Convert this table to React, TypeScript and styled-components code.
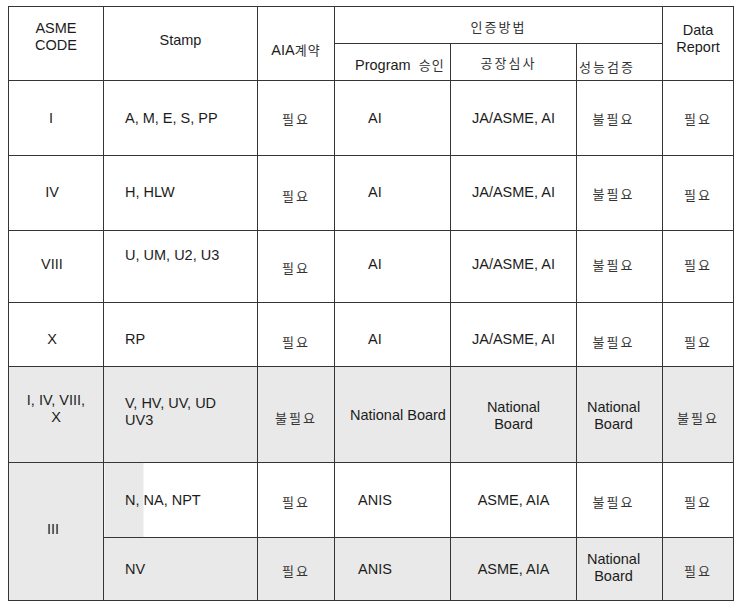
import React from 'react';
import styled, {createGlobalStyle} from 'styled-components';

const GlobalStyle = createGlobalStyle`
  body {
    margin: 0;
    background: #ffffff;
  }
`;

const GREY = '#e9e9e9';

const Page = styled.div`
  padding: 6px 0 0 8px;
`;

const Table = styled.table`
  border-collapse: collapse;
  table-layout: fixed;
  width: 725px;
  font-family: 'Liberation Sans', Arial, sans-serif;
  font-size: 14.5px;
  line-height: 17px;
  color: #1c1c1c;
`;

const Row = styled.tr<{$h: number}>`
  height: ${(p) => p.$h}px;
`;

type CellProps = {
  $align?: 'left' | 'center';
  $pl?: number;
  $pr?: number;
  $dy?: number;
  $grey?: boolean;
  $split?: number;
};

const Cell = styled.td<CellProps>`
  border: 1px solid #353535;
  vertical-align: middle;
  white-space: nowrap;
  overflow: hidden;
  text-align: ${(p) => p.$align || 'center'};
  padding-left: ${(p) => p.$pl || 0}px;
  padding-right: ${(p) => p.$pr || 0}px;
  padding-top: ${(p) => Math.max(0, (p.$dy || 0) * 2)}px;
  padding-bottom: ${(p) => Math.max(0, -(p.$dy || 0) * 2)}px;
  background: ${(p) =>
    p.$split
      ? `linear-gradient(to right, ${GREY} ${p.$split}px, #ffffff ${p.$split}px)`
      : p.$grey
        ? GREY
        : '#ffffff'};
`;

const Ko = styled.span<{$gap?: number}>`
  font-family: 'Noto Sans CJK KR', 'Noto Sans', sans-serif;
  font-size: 13px;
  letter-spacing: ${(p) => p.$gap ?? 2}px;
  color: #333333;
`;

const Yes = () => <Ko>필요</Ko>;
const No = () => <Ko>불필요</Ko>;

type BodyRow = {
  code?: React.ReactNode;
  codeDy?: number;
  codePr?: number;
  stamp: React.ReactNode;
  stampDy?: number;
  aia: React.ReactNode;
  aiaDy?: number;
  program: string;
  programPl: number;
  audit: React.ReactNode;
  perf: React.ReactNode;
  perfDy?: number;
  report: React.ReactNode;
  reportDy?: number;
  dy?: number;
  h: number;
  grey?: boolean;
};

const rows: BodyRow[] = [
  {code: 'I', codePr: 10, stamp: 'A, M,  E,  S,  PP', aia: <Yes />, program: 'AI', programPl: 33, audit: 'JA/ASME, AI', perf: <No />, report: <Yes />, h: 75, aiaDy: 1, perfDy: 1, reportDy: 1},
  {code: 'IV', codePr: 8, stamp: 'H, HLW', aia: <Yes />, program: 'AI', programPl: 33, audit: 'JA/ASME, AI', perf: <No />, report: <Yes />, h: 75, aiaDy: 3, perfDy: 1, reportDy: 2, dy: -1},
  {code: 'VIII', codePr: 8, codeDy: -2, stamp: 'U, UM,  U2,  U3', stampDy: -11, aia: <Yes />, program: 'AI', programPl: 33, audit: 'JA/ASME, AI', perf: <No />, report: <Yes />, h: 72, dy: -2, aiaDy: 1},
  {code: 'X', codePr: 8, stamp: 'RP', aia: <Yes />, program: 'AI', programPl: 33, audit: 'JA/ASME, AI', perf: <No />, report: <Yes />, h: 64, dy: 5, aiaDy: 7, perfDy: 7, reportDy: 7},
  {code: <>I, IV, VIII,<br />X</>, codeDy: -6, stamp: <>V, HV, UV, UD<br />UV3</>, stampDy: -3, aia: <No />, aiaDy: 3, program: 'National  Board', programPl: 15, audit: <>National<br />Board</>, perf: <>National<br />Board</>, report: <No />, reportDy: 3, dy: 1, h: 96, grey: true},
];

export default function App() {
  return (
    <>
      <GlobalStyle />
      <Page>
        <Table>
          <colgroup>
            <col style={{width: 95}} />
            <col style={{width: 154}} />
            <col style={{width: 77}} />
            <col style={{width: 116}} />
            <col style={{width: 126}} />
            <col style={{width: 86}} />
            <col style={{width: 71}} />
          </colgroup>
          <tbody>
            <Row $h={37}>
              <Cell rowSpan={2} $dy={-7}>
                ASME
                <br />
                CODE
              </Cell>
              <Cell rowSpan={2} $dy={-3}>
                Stamp
              </Cell>
              <Cell rowSpan={2} $dy={6}>
                AIA<Ko $gap={1}>계약</Ko>
              </Cell>
              <Cell colSpan={3} $dy={2}>
                <Ko>인증방법</Ko>
              </Cell>
              <Cell rowSpan={2} $dy={-5}>
                Data
                <br />
                Report
              </Cell>
            </Row>
            <Row $h={37}>
              <Cell $align='left' $pl={20} $dy={3}>
                Program&nbsp; <Ko $gap={1}>승인</Ko>
              </Cell>
              <Cell $dy={1} $pr={10}>
                <Ko>공장심사</Ko>
              </Cell>
              <Cell $align='left' $pl={2} $dy={5}>
                <Ko>성능검증</Ko>
              </Cell>
            </Row>

            {rows.map((r, i) => (
              <Row key={i} $h={r.h}>
                <Cell $grey={r.grey} $pr={r.codePr} $dy={r.codeDy ?? r.dy}>
                  {r.code}
                </Cell>
                <Cell $grey={r.grey} $align='left' $pl={21} $dy={r.stampDy ?? r.dy}>
                  {r.stamp}
                </Cell>
                <Cell $grey={r.grey} $dy={r.aiaDy ?? r.dy}>
                  {r.aia}
                </Cell>
                <Cell $grey={r.grey} $align='left' $pl={r.programPl} $dy={r.dy}>
                  {r.program}
                </Cell>
                <Cell $grey={r.grey} $dy={r.dy}>
                  {r.audit}
                </Cell>
                <Cell $grey={r.grey} $pr={12} $dy={r.perfDy ?? r.dy}>
                  {r.perf}
                </Cell>
                <Cell $grey={r.grey} $dy={r.reportDy ?? r.dy}>
                  {r.report}
                </Cell>
              </Row>
            ))}

            <Row $h={75}>
              <Cell rowSpan={2} $grey $pr={6} $dy={-2}>
                III
              </Cell>
              <Cell $split={39} $align='left' $pl={21}>
                N, NA, NPT
              </Cell>
              <Cell $dy={2}>
                <Yes />
              </Cell>
              <Cell $align='left' $pl={23}>
                ANIS
              </Cell>
              <Cell>ASME, AIA</Cell>
              <Cell $pr={12} $dy={2}>
                <No />
              </Cell>
              <Cell $dy={2}>
                <Yes />
              </Cell>
            </Row>
            <Row $h={63}>
              <Cell $grey $align='left' $pl={21}>
                NV
              </Cell>
              <Cell $grey $dy={2}>
                <Yes />
              </Cell>
              <Cell $grey $align='left' $pl={23}>
                ANIS
              </Cell>
              <Cell $grey>ASME, AIA</Cell>
              <Cell $grey $pr={12} $dy={-1}>
                National
                <br />
                Board
              </Cell>
              <Cell $grey $dy={2}>
                <Yes />
              </Cell>
            </Row>
          </tbody>
        </Table>
      </Page>
    </>
  );
}
